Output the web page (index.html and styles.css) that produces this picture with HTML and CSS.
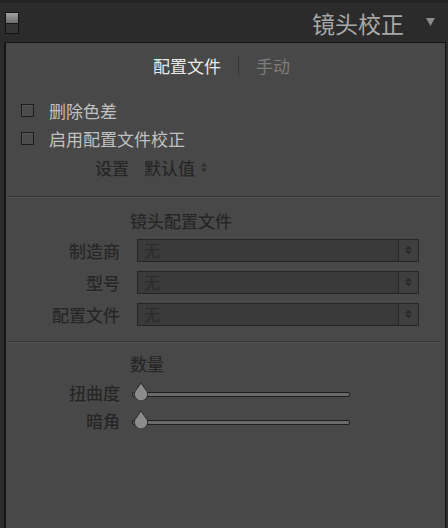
FILE: index.html
```html
<!DOCTYPE html>
<html lang="zh-CN">
<head>
  <meta charset="UTF-8">
  <title>镜头校正</title>
  <link rel="stylesheet" href="styles.css">
</head>
<body>
  <div class="topbar">
    <div class="toggle"><span class="toggle-knob"></span></div>
    <div class="title">镜头校正</div>
    <svg class="collapse" width="9" height="8" viewBox="0 0 9 8">
      <path d="M0 0 L9 0 L4.5 8 Z" fill="#8c8c8c"/>
    </svg>
  </div>

  <div class="panel">
    <div class="tabs">
      <span class="tab active">配置文件</span>
      <span class="tab-sep"></span>
      <span class="tab">手动</span>
    </div>

    <div class="checks">
      <label class="check"><span class="box"></span>删除色差</label>
      <label class="check"><span class="box"></span>启用配置文件校正</label>
      <div class="setting">
        <span class="setting-label">设置</span>
        <span class="setting-value">默认值</span>
        <svg width="6" height="9" viewBox="0 0 6 9"><path d="M3 0 L6 3.5 L0 3.5 Z M3 9 L6 5.5 L0 5.5 Z" fill="#2e2e2e"/></svg>
      </div>
    </div>

    <div class="divider"></div>

    <div class="section">
      <div class="section-title">镜头配置文件</div>
      <div class="row">
        <span class="row-label">制造商</span>
        <div class="select"><span class="select-text">无</span><span class="select-btn"><svg width="9" height="10" viewBox="0 0 9 10"><path d="M4.5 1 L8 4.3 L1 4.3 Z M4.5 9 L8 5.7 L1 5.7 Z" fill="#262626"/></svg></span></div>
      </div>
      <div class="row">
        <span class="row-label">型号</span>
        <div class="select"><span class="select-text">无</span><span class="select-btn"><svg width="9" height="10" viewBox="0 0 9 10"><path d="M4.5 1 L8 4.3 L1 4.3 Z M4.5 9 L8 5.7 L1 5.7 Z" fill="#262626"/></svg></span></div>
      </div>
      <div class="row">
        <span class="row-label">配置文件</span>
        <div class="select"><span class="select-text">无</span><span class="select-btn"><svg width="9" height="10" viewBox="0 0 9 10"><path d="M4.5 1 L8 4.3 L1 4.3 Z M4.5 9 L8 5.7 L1 5.7 Z" fill="#262626"/></svg></span></div>
      </div>
    </div>

    <div class="divider divider-low"></div>

    <div class="section amount-section">
      <div class="section-title amount">数量</div>
      <div class="slider-row">
        <span class="row-label">扭曲度</span>
        <div class="slider">
          <div class="track"></div>
          <svg class="thumb" width="18" height="18" viewBox="0 0 18 18"><path d="M9 1 L15 9.5 A6.6 6.6 0 1 1 3 9.5 Z" fill="#8c8c8c" stroke="#2a2a2a" stroke-width="1"/></svg>
        </div>
      </div>
      <div class="slider-row">
        <span class="row-label">暗角</span>
        <div class="slider">
          <div class="track"></div>
          <svg class="thumb" width="18" height="18" viewBox="0 0 18 18"><path d="M9 1 L15 9.5 A6.6 6.6 0 1 1 3 9.5 Z" fill="#8c8c8c" stroke="#2a2a2a" stroke-width="1"/></svg>
        </div>
      </div>
    </div>
  </div>
</body>
</html>
```

FILE: styles.css
```css
body {
  margin: 0;
  background: #2b2b2b;
  font-family: "Noto Sans CJK SC", "Noto Sans", sans-serif;
  height: 528px;
  overflow: hidden;
  display: flex;
  flex-direction: column;
}
.topbar {
  height: 42px;
  box-sizing: border-box;
  border-top: 3px solid #242424;
  display: flex;
  align-items: center;
  padding: 0 13px 0 5px;
}
.toggle {
  width: 12px;
  height: 20px;
  border: 1px solid #111;
  background: #333;
  display: flex;
  flex-direction: column;
}
.toggle-knob {
  height: 10px;
  background: linear-gradient(#a0a0a0, #6e6e6e);
  border-bottom: 1px solid #1a1a1a;
}
.title {
  margin-left: auto;
  color: #a8a8a8;
  font-size: 23px;
  line-height: 30px;
}
.collapse {
  margin-left: 22px;
  margin-top: -2px;
}
.panel {
  flex: 1;
  margin: 0 2px 0 4px;
  background: #484848;
  border: 1px solid #151515;
  border-left-width: 2px;
  border-bottom: none;
}
.tabs {
  height: 44px;
  display: flex;
  align-items: center;
  justify-content: center;
  gap: 17px;
  padding-right: 8px;
  font-size: 17px;
}
.tab {
  color: #7c7c7c;
}
.tab.active {
  color: #e8e8e8;
}
.tab-sep {
  width: 1px;
  height: 19px;
  background: #333;
}
.checks {
  padding-top: 9px;
}
.check {
  height: 28px;
  display: flex;
  align-items: center;
  padding-left: 15px;
  color: #c0c0c0;
  font-size: 17px;
}
.box {
  width: 11px;
  height: 11px;
  border: 1px solid #1c1c1c;
  background: #4c4c4c;
  box-shadow: inset 1px 1px 0 #555;
  margin-right: 15px;
}
.setting {
  height: 30px;
  display: flex;
  align-items: center;
  font-size: 17px;
  color: #262626;
  font-weight: 500;
  text-shadow: 0 1px 0 rgba(255,255,255,0.05);
}
.setting-label {
  width: 123px;
  text-align: right;
  margin-right: 15px;
}
.setting-value {
  margin-right: 6px;
}
.divider {
  margin: 14px 4px 0 2px;
  height: 1px;
  background: #333;
  border-bottom: 1px solid #555;
}
.divider-low {
  margin-top: 11px;
}
.section {
  padding-top: 10px;
}
.amount-section {
  padding-top: 8px;
}
.section-title {
  height: 26px;
  line-height: 26px;
  padding-left: 124px;
  font-size: 17px;
  font-weight: 500;
  color: #262626;
  text-shadow: 0 1px 0 rgba(255,255,255,0.05);
}
.row {
  height: 32px;
  display: flex;
  align-items: center;
}
.row-label {
  width: 114px;
  text-align: right;
  font-size: 17px;
  font-weight: 500;
  color: #262626;
  text-shadow: 0 1px 0 rgba(255,255,255,0.05);
}
.select {
  margin-left: 17px;
  width: 282px;
  height: 23px;
  box-sizing: border-box;
  border: 1px solid #262626;
  background: #3a3a3a;
  display: flex;
  align-items: center;
}
.select-text {
  flex: 1;
  padding-left: 6px;
  font-size: 16px;
  color: #2a2a2a;
}
.select-btn {
  width: 19px;
  height: 100%;
  border-left: 1px solid #2a2a2a;
  background: #3f3f3f;
  display: flex;
  align-items: center;
  justify-content: center;
}
.amount {
  margin-bottom: 1px;
}
.slider-row {
  height: 28px;
  display: flex;
  align-items: center;
}
.slider {
  margin-left: 12px;
  width: 218px;
  height: 18px;
  position: relative;
  display: flex;
  align-items: center;
}
.track {
  flex: 1;
  height: 3px;
  margin-top: 4px;
  border: 1px solid #1e1e1e;
  border-radius: 2px;
  background: #6a6a6a;
}
.thumb {
  position: absolute;
  left: 0;
  top: -1px;
}
```
